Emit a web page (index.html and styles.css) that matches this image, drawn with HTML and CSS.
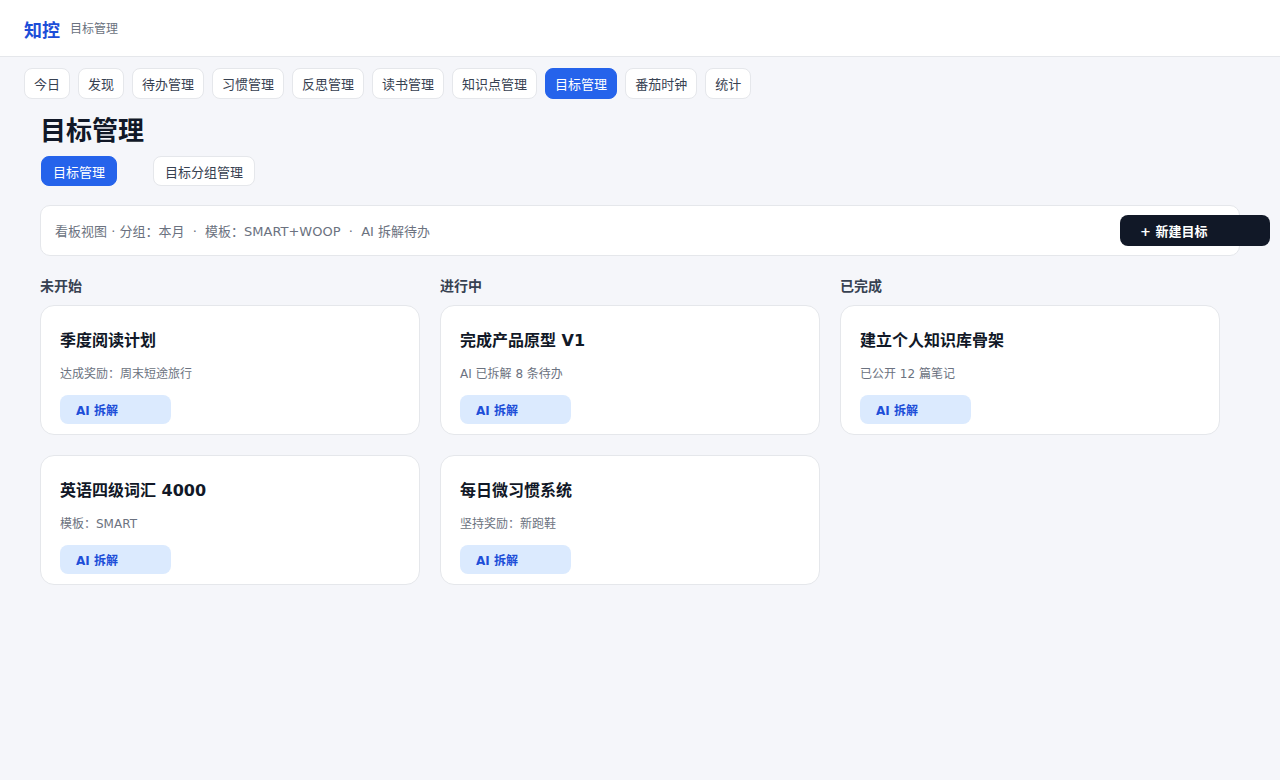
FILE: index.html
```html
<!DOCTYPE html>
<html lang="zh-CN">
<head>
<meta charset="utf-8">
<title>知控 · 目标管理</title>
<link rel="stylesheet" href="styles.css">
</head>
<body>
<header class="topbar">
  <span class="logo">知控</span>
  <span class="crumb">目标管理</span>
</header>
<nav class="nav">
  <a class="pill">今日</a>
  <a class="pill">发现</a>
  <a class="pill">待办管理</a>
  <a class="pill">习惯管理</a>
  <a class="pill">反思管理</a>
  <a class="pill">读书管理</a>
  <a class="pill">知识点管理</a>
  <a class="pill active">目标管理</a>
  <a class="pill">番茄时钟</a>
  <a class="pill">统计</a>
</nav>
<main class="main">
  <h1 class="title">目标管理</h1>
  <div class="tabs">
    <a class="tab active">目标管理</a>
    <a class="tab">目标分组管理</a>
  </div>
  <div class="toolbar">
    <span class="meta">看板视图 · 分组：本月 &nbsp;·&nbsp; 模板：SMART+WOOP &nbsp;·&nbsp; AI 拆解待办</span>
    <button class="new-btn">+ 新建目标</button>
  </div>
  <section class="board">
    <div class="col">
      <h2 class="col-title">未开始</h2>
      <div class="card">
        <h3 class="card-title">季度阅读计划</h3>
        <p class="card-sub">达成奖励：周末短途旅行</p>
        <button class="ai-btn">AI 拆解</button>
      </div>
      <div class="card">
        <h3 class="card-title">英语四级词汇 4000</h3>
        <p class="card-sub">模板：SMART</p>
        <button class="ai-btn">AI 拆解</button>
      </div>
    </div>
    <div class="col">
      <h2 class="col-title">进行中</h2>
      <div class="card">
        <h3 class="card-title">完成产品原型 V1</h3>
        <p class="card-sub">AI 已拆解 8 条待办</p>
        <button class="ai-btn">AI 拆解</button>
      </div>
      <div class="card">
        <h3 class="card-title">每日微习惯系统</h3>
        <p class="card-sub">坚持奖励：新跑鞋</p>
        <button class="ai-btn">AI 拆解</button>
      </div>
    </div>
    <div class="col">
      <h2 class="col-title">已完成</h2>
      <div class="card">
        <h3 class="card-title">建立个人知识库骨架</h3>
        <p class="card-sub">已公开 12 篇笔记</p>
        <button class="ai-btn">AI 拆解</button>
      </div>
    </div>
  </section>
</main>
</body>
</html>
```
FILE: styles.css
```css
* { box-sizing: border-box; }
html, body { margin: 0; padding: 0; }
body {
  background: #f5f6fa;
  font-family: "DejaVu Sans", "Noto Sans CJK SC", sans-serif;
  color: #111827;
  width: 1280px;
  height: 780px;
  overflow: hidden;
}
.topbar {
  height: 57px;
  background: #fff;
  border-bottom: 1px solid #e5e7eb;
  display: flex;
  align-items: center;
  padding: 0 24px;
  gap: 10px;
}
.logo {
  font-size: 18px;
  font-weight: 700;
  color: #1d4ed8;
  line-height: 24px;
  padding-top: 5px;
}
.crumb {
  font-size: 12px;
  color: #6b7280;
  line-height: 18px;
  padding-top: 1px;
}
.nav {
  display: flex;
  gap: 8px;
  padding: 11px 24px 0;
}
.pill {
  display: inline-flex;
  align-items: center;
  height: 31px;
  padding: 0 9px;
  font-size: 13px;
  color: #374151;
  background: #fff;
  border: 1px solid #e5e7eb;
  border-radius: 8px;
}
.pill.active {
  background: #2563eb;
  border-color: #2563eb;
  color: #fff;
}
.main {
  padding: 15px 40px 0;
  width: 1280px;
}
.title {
  margin: 0;
  font-size: 26px;
  line-height: 34px;
  font-weight: 700;
  color: #111827;
}
.tabs {
  display: flex;
  gap: 36px;
  margin-top: 8px;
  padding-left: 1px;
}
.tab {
  display: inline-flex;
  align-items: center;
  height: 30px;
  padding: 0 11px;
  font-size: 13px;
  color: #374151;
  background: #fff;
  border: 1px solid #e5e7eb;
  border-radius: 8px;
}
.tab.active {
  background: #2563eb;
  border-color: #2563eb;
  color: #fff;
}
.toolbar {
  margin-top: 19px;
  height: 51px;
  background: #fff;
  border: 1px solid #e5e7eb;
  border-radius: 10px;
  display: flex;
  align-items: center;
  padding: 0 14px;
}
.meta {
  flex: 1;
  font-size: 13px;
  color: #6b7280;
}
.new-btn {
  width: 150px;
  height: 31px;
  margin-right: -45px;
  background: #111827;
  color: #fff;
  border: none;
  border-radius: 8px;
  font-family: inherit;
  font-size: 13px;
  font-weight: 700;
  text-align: left;
  padding: 0 20px;
}
.board {
  display: grid;
  grid-template-columns: repeat(3, 380px);
  column-gap: 20px;
  margin-top: 19px;
  align-items: start;
}
.col {
  display: flex;
  flex-direction: column;
  gap: 20px;
}
.col-title {
  margin: 0 0 -12px;
  font-size: 14px;
  line-height: 22px;
  font-weight: 700;
  color: #374151;
}
.card {
  height: 130px;
  background: #fff;
  border: 1px solid #e5e7eb;
  border-radius: 14px;
  padding: 20px 19px 0;
}
.card-title {
  margin: 0;
  font-size: 16px;
  line-height: 30px;
  font-weight: 700;
  color: #111827;
}
.card-sub {
  margin: 9px 0 0;
  font-size: 12px;
  line-height: 18px;
  color: #6b7280;
}
.ai-btn {
  margin-top: 12px;
  width: 111px;
  height: 29px;
  background: #dbeafe;
  color: #1d4ed8;
  border: none;
  border-radius: 8px;
  font-family: inherit;
  font-size: 12px;
  font-weight: 700;
  text-align: left;
  padding: 0 16px;
  display: block;
}
```
